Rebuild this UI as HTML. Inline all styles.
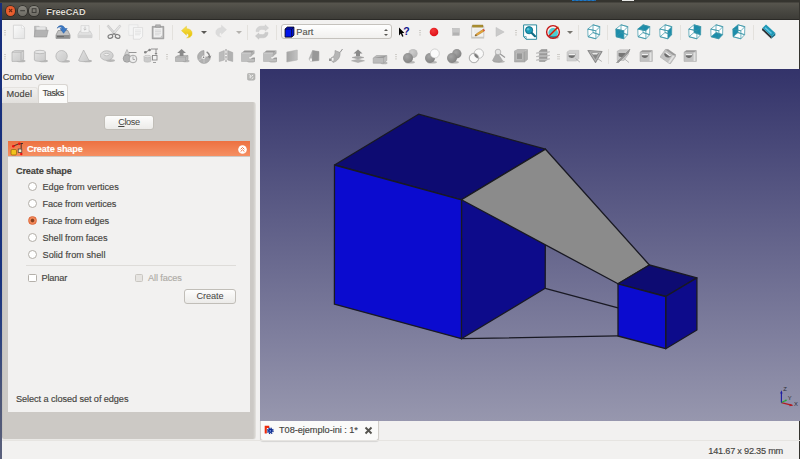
<!DOCTYPE html>
<html><head><meta charset="utf-8"><title>FreeCAD</title>
<style>
html,body{margin:0;padding:0;}
body{width:800px;height:459px;overflow:hidden;background:#f2f1f0;position:relative;font-family:"Liberation Sans","DejaVu Sans",sans-serif;font-size:9.2px;color:#45443f;}
.abs{position:absolute;}
#title{left:0;top:0;width:800px;height:20px;background:linear-gradient(#35342f 0,#35342f 2px,#57554e 3px,#4a4943 10px,#3e3d38 18.5px,#2b2a27 19.5px,#2b2a27 20px);}
#title .t{position:absolute;left:46.3px;top:7.2px;text-shadow:0 -0.6px 0 #22211e;font-weight:bold;font-size:9.2px;color:#dfdbd2;letter-spacing:0;}
.wb{position:absolute;top:6.4px;width:9.2px;height:9.2px;border-radius:50%;}
#ledge{left:0;top:2.500px;width:1.600px;height:457px;background:linear-gradient(#172e7c 0,#18327e 60%,#2a4180 72%,#4d5676 86%,#5a607c 100%);z-index:5;}
#view{left:260px;top:69px;width:540px;height:351.500px;background:linear-gradient(#33336a,#9797ae);}
#pane{left:2.400px;top:102.400px;width:253.900px;height:337px;background:linear-gradient(90deg,#b9b6b1 0,#ccc9c5 .8px,#ccc9c5 251.100px,#d9d7d3 252.900px,#e6e4e1 253.900px);border-radius:0 3px 3px 2px;box-shadow:0 .8px 0 #e9e7e4;}
#box{left:8px;top:156.500px;width:242.200px;height:255px;background:#f2f1f0;}
#hdr{left:8px;top:141.300px;width:242.200px;height:15.200px;background:linear-gradient(#ed7141,#f58f62);}
.lbl{position:absolute;white-space:nowrap;line-height:12px;-webkit-text-stroke:.15px currentColor;}
.radio{position:absolute;width:7.300px;height:7.300px;border-radius:50%;border:.9px solid #b2aea8;background:#fff;}
.chk{position:absolute;width:6.600px;height:6.600px;border-radius:1.500px;border:.9px solid #b4b0aa;background:#fff;}
.btn{position:absolute;border:1px solid #c1beb8;border-radius:3px;background:linear-gradient(#fdfdfc,#ecebe9);box-sizing:border-box;text-align:center;line-height:13px;}
</style></head><body>
<div id="title" class="abs">
 <div class="wb" style="left:5.9px;background:radial-gradient(#f2703f,#de4a1c);box-shadow:0 0 0 .7px #36251d;"></div>
 <div class="wb" style="left:17.7px;background:linear-gradient(#8a8880,#6c6a63);box-shadow:0 0 0 .7px #2d2c29;"></div>
 <div class="wb" style="left:29.4px;background:linear-gradient(#8a8880,#6c6a63);box-shadow:0 0 0 .7px #2d2c29;"></div>
 <svg class="abs" style="left:5.9px;top:6.4px" width="34" height="10" viewBox="0 0 34 10"><path d="M3 3L6.200 6.200M6.200 3L3 6.200" stroke="#6a2410" stroke-width="1.100"/><path d="M14.200 4.700H19" stroke="#3f3e3a" stroke-width="1.100"/><rect x="26.200" y="2.700" width="3.800" height="3.800" fill="none" stroke="#3f3e3a" stroke-width="1"/></svg>
 <div class="t">FreeCAD</div>
</div>
<div id="ledge" class="abs"></div>
<div id="redge" class="abs" style="left:798.700px;top:0;width:1.300px;height:459px;background:#35342f;"></div>
<div class="abs" style="left:571.500px;top:0;width:24px;height:1.300px;background:repeating-linear-gradient(90deg,#1a78c8 0,#1a78c8 2px,#2b4f78 3px,#1a78c8 4px);"></div>
<div class="abs" style="left:622px;top:0;width:12px;height:1px;background:#e8e8e6;"></div>
<div id="tb" class="abs" style="left:0;top:20px;width:800px;height:49px;"></div><!--TB--><div class="abs" style="left:3.8px;top:30.1px;width:2.5px;height:1px;background:#cfcdc9;box-shadow:0 2.2px 0 #cfcdc9,0 4.4px 0 #cfcdc9;"></div>
<svg class="abs" style="left:11.0px;top:24.0px" width="16" height="16" viewBox="0 0 16 16"><defs><linearGradient id="gN" x1="0" y1="0" x2="1" y2="1"><stop offset="0" stop-color="#fbfbfb"/><stop offset="1" stop-color="#e3e3e3"/></linearGradient></defs><path d="M2.4 1.2H11L13.6 3.8V14.6H2.4Z" fill="url(#gN)" stroke="#cfcfcf" stroke-width=".8"/><path d="M10.6 1.4V4.2H13.4" fill="#fff" stroke="#d8d8d8" stroke-width=".6"/></svg>
<svg class="abs" style="left:33.0px;top:24.0px" width="16" height="16" viewBox="0 0 16 16"><path d="M1.5 2.3H6L7 3.5H13.6V12.5H1.5Z" fill="#bdbdbd" stroke="#a9a9a9" stroke-width=".6"/><path d="M3.2 2.8H12.8V9H3.2Z" fill="#e6e6e6" stroke="#c4c4c4" stroke-width=".5"/><path d="M2.2 6.2H15.2L13.6 13H1.2Z" fill="#b3b3b3" stroke="#9c9c9c" stroke-width=".6"/></svg>
<svg class="abs" style="left:55.0px;top:24.0px" width="16" height="16" viewBox="0 0 16 16"><path d="M3.2 6.5H12.8L15 11V14.4H1V11Z" fill="#c2c2c2" stroke="#8a8a8a" stroke-width=".7"/><path d="M1.3 11H14.7V14.2H1.3Z" fill="#8f8f8f"/><path d="M2 12.6H9" stroke="#5e5e5e" stroke-width=".8"/><path d="M2.2 4.2C3.5 .8 8.6 .4 10 4.6L12.2 4.6L8.6 9.3L5 4.6H7.2C6.6 2.6 4 2.4 2.2 4.2Z" fill="#3a78c4" stroke="#2a5c9e" stroke-width=".5"/></svg>
<svg class="abs" style="left:77.0px;top:24.0px" width="16" height="16" viewBox="0 0 16 16"><path d="M3 7H13L15 10.6V13.6H1V10.6Z" fill="#e2e2e2" stroke="#c6c6c6" stroke-width=".7"/><path d="M4 1.6H12V8.6H4Z" fill="#f2f2f2" stroke="#cdcdcd" stroke-width=".6"/><path d="M8 2.6V6M6.6 4.8L8 6.2L9.4 4.8" stroke="#bdbdbd" stroke-width=".8" fill="none"/><path d="M1.3 10.8H14.7V13.4H1.3Z" fill="#d2d2d2"/></svg>
<div class="abs" style="left:99.2px;top:24.5px;width:1px;height:15px;background:#e3e1dd;"></div>
<svg class="abs" style="left:106.0px;top:24.0px" width="16" height="16" viewBox="0 0 16 16"><path d="M2.300 .9L9.800 9.400L8.200 10.800L1.300 2.400Z" fill="#d8d8d8" stroke="#b6b6b6" stroke-width=".5"/><path d="M13.700 .9L6.200 9.400L7.800 10.800L14.700 2.400Z" fill="#e4e4e4" stroke="#b6b6b6" stroke-width=".5"/><ellipse cx="4.400" cy="12.400" rx="2.400" ry="1.800" fill="none" stroke="#808080" stroke-width="1.150" transform="rotate(-20 4.400 12.400)"/><ellipse cx="11.600" cy="12.400" rx="2.400" ry="1.800" fill="none" stroke="#808080" stroke-width="1.150" transform="rotate(20 11.600 12.400)"/><path d="M6.400 10.900L8 9.400L9.600 10.900" stroke="#808080" stroke-width="1.100" fill="none"/></svg>
<svg class="abs" style="left:127.5px;top:24.0px" width="16" height="16" viewBox="0 0 16 16"><path d="M.8 .8H10V11.4H.8Z" fill="#f4f4f4" stroke="#dcdcdc" stroke-width=".6"/><path d="M5.4 3.6H14.6V12.4L12 15.2H5.4Z" fill="#f6f6f6" stroke="#d2d2d2" stroke-width=".6"/><path d="M7 6H13M7 7.6H13M7 9.200H13M7 10.800H12" stroke="#dedede" stroke-width=".7"/></svg>
<svg class="abs" style="left:150.0px;top:24.0px" width="16" height="16" viewBox="0 0 16 16"><path d="M2.200 2.400H13.800V14.800H2.200Z" fill="#a6a6a6" stroke="#8e8e8e" stroke-width=".6"/><path d="M3.500 3.700H12.500V13.500H3.500Z" fill="#efefef"/><path d="M5.6 .8H10.4V3.200H5.6Z" fill="#b5b5b5" stroke="#8a8a8a" stroke-width=".5"/><path d="M5 6H11M5 7.600H11M5 9.200H11M5 10.800H9.5" stroke="#cfcfcf" stroke-width=".7"/><path d="M10 13.4L12.4 11V13.4Z" fill="#bdbdbd"/></svg>
<div class="abs" style="left:172.0px;top:24.5px;width:1px;height:15px;background:#e3e1dd;"></div>
<svg class="abs" style="left:179.0px;top:23.7px" width="16" height="16" viewBox="0 0 16 16"><defs><linearGradient id="gU" x1="0" y1="0" x2="0" y2="1"><stop offset="0" stop-color="#f8e050"/><stop offset="1" stop-color="#e6c000"/></linearGradient></defs><g transform="translate(1.1 1.300) scale(.86)"><path d="M1.6 6.200L7.400 1V4C12.2 4 14.600 7 13.800 10.800C13.200 13.200 11 14.800 7.600 14.600C10.400 13.400 11 10.400 7.400 9.200V11.600Z" fill="url(#gU)" stroke="#e6c820" stroke-width=".5"/></g></svg>
<div class="abs" style="left:201.4px;top:30.9px;width:0;height:0;border-left:3.100px solid transparent;border-right:3.100px solid transparent;border-top:3.600px solid #5a5955;"></div>
<svg class="abs" style="left:213.3px;top:23.4px" width="16" height="16" viewBox="0 0 16 16"><g transform="translate(1.1 1.300) scale(.86)"><path d="M14.400 6.200L8.600 1V4C3.800 4 1.400 7 2.200 10.800C2.800 13.200 5 14.800 8.400 14.600C5.600 13.400 5 10.400 8.600 9.200V11.600Z" fill="#d8d8d8" stroke="#cdcdcd" stroke-width=".4" opacity=".85"/></g></svg>
<div class="abs" style="left:235.7px;top:30.9px;width:0;height:0;border-left:3.100px solid transparent;border-right:3.100px solid transparent;border-top:3.600px solid #b4b2ae;"></div>
<div class="abs" style="left:247.0px;top:24.5px;width:1px;height:15px;background:#e3e1dd;"></div>
<svg class="abs" style="left:254.3px;top:23.7px" width="16" height="16" viewBox="0 0 16 16"><path d="M2 7.600C2 3.600 5 1.800 8.400 2.200L11.200 2.200V.8L14.600 4L11.200 7V5.400H8.400C6.200 5.200 5 6.200 5 7.600Z" fill="#d4d4d4" stroke="#c6c6c6" stroke-width=".4"/><path d="M14 8.400C14 12.400 11 14.200 7.600 13.800L4.800 13.800V15.200L1.400 12L4.800 9V10.600H7.600C9.800 10.800 11 9.800 11 8.400Z" fill="#cbcbcb" stroke="#bdbdbd" stroke-width=".4"/></svg>
<div class="abs" style="left:276.0px;top:24.5px;width:1px;height:15px;background:#e3e1dd;"></div>
<div class="abs" style="left:280.700px;top:24.300px;width:111.200px;height:14.400px;border:1px solid #c5c2bd;border-radius:3px;background:linear-gradient(#ffffff,#f1f0ee);box-sizing:border-box;"></div>
<svg class="abs" style="left:283.500px;top:25.500px" width="12" height="13" viewBox="0 0 12 13"><path d="M1.100 3L3.300 1.100H9.900V9.200L7.700 11.100H1.100Z" fill="#0014ec" stroke="#05051e" stroke-width=".9" stroke-linejoin="round"/><path d="M1.100 3H7.700L9.900 1.100M7.700 3V11.100" fill="none" stroke="#05051e" stroke-width=".8"/></svg>
<div class="lbl" style="left:296.3px;top:26px;letter-spacing:.05px;color:#55544f">Part</div>
<div class="abs" style="left:384.400px;top:28.600px;width:0;height:0;border-left:2px solid transparent;border-right:2px solid transparent;border-bottom:2.500px solid #5a5955;"></div>
<div class="abs" style="left:384.400px;top:34.200px;width:0;height:0;border-left:2px solid transparent;border-right:2px solid transparent;border-top:2.500px solid #5a5955;"></div>
<svg class="abs" style="left:395.6px;top:23.7px" width="16" height="16" viewBox="0 0 16 16"><path d="M3 3.600V11.400L4.800 9.600L6.200 12.800L7.500 12.200L6.100 9.100H8.400Z" fill="#000"/><text x="7.300" y="11" font-family="Liberation Sans,sans-serif" font-weight="bold" font-size="10.500" fill="#14148c">?</text></svg>
<div class="abs" style="left:418.6px;top:29.6px;width:2.5px;height:1px;background:#cfcdc9;box-shadow:0 2.2px 0 #cfcdc9,0 4.4px 0 #cfcdc9;"></div>
<svg class="abs" style="left:426.0px;top:23.7px" width="16" height="16" viewBox="0 0 16 16"><defs><radialGradient id="gR" cx=".4" cy=".35" r=".7"><stop offset="0" stop-color="#f43a3a"/><stop offset="1" stop-color="#dc0c14"/></radialGradient></defs><circle cx="8" cy="8" r="4.300" fill="url(#gR)"/></svg>
<svg class="abs" style="left:448.4px;top:23.6px" width="16" height="16" viewBox="0 0 16 16"><rect x="4.600" y="4.400" width="6.800" height="7" fill="#c6c6c6" stroke="#b4b4b4" stroke-width=".5"/><rect x="5" y="8.500" width="6" height="2.600" fill="#b2b2b2"/></svg>
<svg class="abs" style="left:470.3px;top:23.5px" width="16" height="16" viewBox="0 0 16 16"><path d="M1.600 2.600H13.800V13.200H1.600Z" fill="#f3f3f1" stroke="#bdbdb8" stroke-width=".7"/><path d="M1.300 13H14.100V14.600H1.300Z" fill="#c9c9c4"/><path d="M2.400 1H13V3.200H2.400Z" fill="#ad9232" stroke="#8a7220" stroke-width=".4"/><path d="M4 6H11M4 8H9" stroke="#e0e0dc" stroke-width=".7"/><path d="M5.800 10.200L12.800 5.600L14 7.200L7 11.600L5 12Z" fill="#e8a83a" stroke="#a8741c" stroke-width=".5"/><path d="M12.800 5.600L13.800 5L15 6.600L14 7.200Z" fill="#e03a2a"/><path d="M5 12L5.800 10.200L7 11.600Z" fill="#5a4a30"/></svg>
<svg class="abs" style="left:492.0px;top:23.6px" width="16" height="16" viewBox="0 0 16 16"><path d="M4 3.400L12.200 8L4 12.400Z" fill="#cacaca" stroke="#bcbcbc" stroke-width=".5"/></svg>
<div class="abs" style="left:514.8px;top:29.6px;width:2.5px;height:1px;background:#cfcdc9;box-shadow:0 2.2px 0 #cfcdc9,0 4.4px 0 #cfcdc9;"></div>
<svg class="abs" style="left:522.0px;top:23.7px" width="16" height="16" viewBox="0 0 16 16"><path d="M1.600 .9H14.600V15.300H4.200L1.600 12.600Z" fill="#fff" stroke="#2c8a9e" stroke-width="1"/><path d="M1.600 12.600H4.200V15.300" fill="none" stroke="#2c8a9e" stroke-width=".7"/><circle cx="7.100" cy="6.200" r="3.600" fill="#1b9cb8" stroke="#0f6c84" stroke-width=".9"/><circle cx="6.100" cy="5.200" r="1.300" fill="#5cc4d8"/><path d="M9.800 9L13 12.200" stroke="#0f6c84" stroke-width="2.200" stroke-linecap="round"/></svg>
<svg class="abs" style="left:544.7px;top:23.7px" width="16" height="16" viewBox="0 0 16 16"><circle cx="8.200" cy="8.800" r="4.800" fill="#48ccd4"/><path d="M4 11.200A4.800 4.800 0 0 0 12.600 11.600Q8 13 4 11.200Z" fill="#1a9aa8"/><ellipse cx="8.800" cy="13.600" rx="5" ry="1.200" fill="#555" opacity=".5"/><path d="M6 10.400L13.600 2.800" stroke="#e8c040" stroke-width="1.600"/><circle cx="8" cy="8" r="6.400" fill="none" stroke="#c41616" stroke-width="1.400"/><path d="M12.500 3.500L3.500 12.500" stroke="#c41616" stroke-width="1.400"/></svg>
<div class="abs" style="left:566.5px;top:30.9px;width:0;height:0;border-left:3.100px solid transparent;border-right:3.100px solid transparent;border-top:3.600px solid #77756f;"></div>
<div class="abs" style="left:578.2px;top:24.5px;width:1px;height:15px;background:#e3e1dd;"></div>
<svg class="abs" style="left:585.5px;top:23.7px" width="16" height="16" viewBox="0 0 16 16"><path d="M1.80 5.05L7.00 0.80L13.80 2.70L13.60 10.70L9.90 14.80L2.00 12.70Z" fill="#fdfefe"/><g fill="none" stroke="#3793a6" stroke-width=".7" stroke-linejoin="round"><path d="M7.00 0.80L13.80 2.70L13.60 10.70L7.00 8.55Z"/><path d="M1.80 5.05L9.90 6.80L9.90 14.80L2.00 12.70Z"/><path d="M1.80 5.05L7.00 0.80L13.80 2.70L9.90 6.80Z"/><path d="M2.00 12.70L9.90 14.80L13.60 10.70L7.00 8.55Z"/></g></svg>
<div class="abs" style="left:607.1px;top:24.5px;width:1px;height:15px;background:#e3e1dd;"></div>
<svg class="abs" style="left:613.8px;top:23.7px" width="16" height="16" viewBox="0 0 16 16"><path d="M1.80 5.05L7.00 0.80L13.80 2.70L13.60 10.70L9.90 14.80L2.00 12.70Z" fill="#fdfefe"/><path d="M1.80 5.05L9.90 6.80L9.90 14.80L2.00 12.70Z" fill="#1c8dab"/><g fill="none" stroke="#3793a6" stroke-width=".7" stroke-linejoin="round"><path d="M7.00 0.80L13.80 2.70L13.60 10.70L7.00 8.55Z"/><path d="M1.80 5.05L9.90 6.80L9.90 14.80L2.00 12.70Z"/><path d="M1.80 5.05L7.00 0.80L13.80 2.70L9.90 6.80Z"/><path d="M2.00 12.70L9.90 14.80L13.60 10.70L7.00 8.55Z"/></g></svg>
<svg class="abs" style="left:635.9px;top:23.7px" width="16" height="16" viewBox="0 0 16 16"><path d="M1.80 5.05L7.00 0.80L13.80 2.70L13.60 10.70L9.90 14.80L2.00 12.70Z" fill="#fdfefe"/><path d="M1.80 5.05L7.00 0.80L13.80 2.70L9.90 6.80Z" fill="#1c8dab"/><g fill="none" stroke="#3793a6" stroke-width=".7" stroke-linejoin="round"><path d="M7.00 0.80L13.80 2.70L13.60 10.70L7.00 8.55Z"/><path d="M1.80 5.05L9.90 6.80L9.90 14.80L2.00 12.70Z"/><path d="M1.80 5.05L7.00 0.80L13.80 2.70L9.90 6.80Z"/><path d="M2.00 12.70L9.90 14.80L13.60 10.70L7.00 8.55Z"/></g></svg>
<svg class="abs" style="left:657.9px;top:23.7px" width="16" height="16" viewBox="0 0 16 16"><path d="M1.80 5.05L7.00 0.80L13.80 2.70L13.60 10.70L9.90 14.80L2.00 12.70Z" fill="#fdfefe"/><path d="M9.90 6.80L13.80 2.70L13.60 10.70L9.90 14.80Z" fill="#1c8dab"/><g fill="none" stroke="#3793a6" stroke-width=".7" stroke-linejoin="round"><path d="M7.00 0.80L13.80 2.70L13.60 10.70L7.00 8.55Z"/><path d="M1.80 5.05L9.90 6.80L9.90 14.80L2.00 12.70Z"/><path d="M1.80 5.05L7.00 0.80L13.80 2.70L9.90 6.80Z"/><path d="M2.00 12.70L9.90 14.80L13.60 10.70L7.00 8.55Z"/></g></svg>
<div class="abs" style="left:679.9px;top:24.5px;width:1px;height:15px;background:#e3e1dd;"></div>
<svg class="abs" style="left:687.0px;top:23.7px" width="16" height="16" viewBox="0 0 16 16"><path d="M1.80 5.05L7.00 0.80L13.80 2.70L13.60 10.70L9.90 14.80L2.00 12.70Z" fill="#fdfefe"/><path d="M7.00 0.80L13.80 2.70L13.60 10.70L7.00 8.55Z" fill="#1c8dab"/><g fill="none" stroke="#3793a6" stroke-width=".7" stroke-linejoin="round"><path d="M7.00 0.80L13.80 2.70L13.60 10.70L7.00 8.55Z"/><path d="M1.80 5.05L9.90 6.80L9.90 14.80L2.00 12.70Z"/><path d="M1.80 5.05L7.00 0.80L13.80 2.70L9.90 6.80Z"/><path d="M2.00 12.70L9.90 14.80L13.60 10.70L7.00 8.55Z"/></g></svg>
<svg class="abs" style="left:709.0px;top:23.7px" width="16" height="16" viewBox="0 0 16 16"><path d="M1.80 5.05L7.00 0.80L13.80 2.70L13.60 10.70L9.90 14.80L2.00 12.70Z" fill="#fdfefe"/><path d="M2.00 12.70L9.90 14.80L13.60 10.70L7.00 8.55Z" fill="#1c8dab"/><g fill="none" stroke="#3793a6" stroke-width=".7" stroke-linejoin="round"><path d="M7.00 0.80L13.80 2.70L13.60 10.70L7.00 8.55Z"/><path d="M1.80 5.05L9.90 6.80L9.90 14.80L2.00 12.70Z"/><path d="M1.80 5.05L7.00 0.80L13.80 2.70L9.90 6.80Z"/><path d="M2.00 12.70L9.90 14.80L13.60 10.70L7.00 8.55Z"/></g></svg>
<svg class="abs" style="left:731.0px;top:23.7px" width="16" height="16" viewBox="0 0 16 16"><path d="M1.80 5.05L7.00 0.80L13.80 2.70L13.60 10.70L9.90 14.80L2.00 12.70Z" fill="#fdfefe"/><path d="M1.80 5.05L7.00 0.80L7.00 8.55L2.00 12.70Z" fill="#1c8dab"/><g fill="none" stroke="#3793a6" stroke-width=".7" stroke-linejoin="round"><path d="M7.00 0.80L13.80 2.70L13.60 10.70L7.00 8.55Z"/><path d="M1.80 5.05L9.90 6.80L9.90 14.80L2.00 12.70Z"/><path d="M1.80 5.05L7.00 0.80L13.80 2.70L9.90 6.80Z"/><path d="M2.00 12.70L9.90 14.80L13.60 10.70L7.00 8.55Z"/></g></svg>
<div class="abs" style="left:753.2px;top:24.5px;width:1px;height:15px;background:#e3e1dd;"></div>
<svg class="abs" style="left:760.5px;top:24.2px" width="16" height="16" viewBox="0 0 16 16"><path d="M1.500 3.900L10.800 12.400L10.200 14.800L.9 6Z" fill="#2e3236"/><path d="M10.800 12.400L14.300 9.100V11.200L10.200 14.800Z" fill="#0f6a84"/><path d="M1.500 3.900L5 .6L14.300 9.100L10.800 12.400Z" fill="#1e98b6"/><path d="M4 3.600L10.500 9.500" stroke="#62c6e6" stroke-width="1.600"/></svg>
<div class="abs" style="left:3.8px;top:53.8px;width:2.5px;height:1px;background:#cfcdc9;box-shadow:0 2.2px 0 #cfcdc9,0 4.4px 0 #cfcdc9;"></div>
<svg class="abs" style="left:10.0px;top:48.3px;opacity:0.88" width="16" height="16" viewBox="0 0 16 16"><defs><linearGradient id="gG" x1="0" y1="0" x2="1" y2="1"><stop offset="0" stop-color="#e0e0e0"/><stop offset="1" stop-color="#c4c4c4"/></linearGradient></defs><ellipse cx="11" cy="13" rx="4.5" ry="1.300" fill="#9a9a9a" opacity=".75"/><path d="M2 4.200L4.600 2.600H13.600V11.400L11 13.400H2Z" fill="url(#gG)" stroke="#a6a6a6" stroke-width=".7" stroke-linejoin="round"/><path d="M2 4.200H11L13.600 2.600M11 4.200V13.400" fill="none" stroke="#a6a6a6" stroke-width=".7"/></svg>
<svg class="abs" style="left:32.3px;top:48.3px;opacity:0.88" width="16" height="16" viewBox="0 0 16 16"><ellipse cx="11.5" cy="13" rx="4.5" ry="1.300" fill="#9a9a9a" opacity=".75"/><path d="M2.400 4V12C2.400 13.800 13.400 13.800 13.400 12V4Z" fill="url(#gG)" stroke="#a6a6a6" stroke-width=".7"/><ellipse cx="7.900" cy="4" rx="5.500" ry="1.700" fill="#e6e6e6" stroke="#a6a6a6" stroke-width=".7"/></svg>
<svg class="abs" style="left:54.3px;top:48.3px;opacity:0.88" width="16" height="16" viewBox="0 0 16 16"><ellipse cx="11.5" cy="13.2" rx="4.5" ry="1.300" fill="#9a9a9a" opacity=".75"/><circle cx="7.600" cy="8.200" r="5.700" fill="url(#gG)" stroke="#a6a6a6" stroke-width=".7"/></svg>
<svg class="abs" style="left:76.0px;top:48.3px;opacity:0.88" width="16" height="16" viewBox="0 0 16 16"><ellipse cx="11.5" cy="13" rx="4.5" ry="1.300" fill="#9a9a9a" opacity=".75"/><path d="M7.600 2L13 12.400C13 14 2.600 14 2.600 12.400Z" fill="url(#gG)" stroke="#a6a6a6" stroke-width=".7" stroke-linejoin="round"/></svg>
<svg class="abs" style="left:98.7px;top:48.3px;opacity:0.88" width="16" height="16" viewBox="0 0 16 16"><ellipse cx="11.5" cy="12.6" rx="4.5" ry="1.300" fill="#9a9a9a" opacity=".75"/><ellipse cx="7.800" cy="7.600" rx="6.400" ry="4.800" fill="url(#gG)" stroke="#a6a6a6" stroke-width=".7"/><ellipse cx="7.600" cy="6.600" rx="2.600" ry="1.200" fill="#f2f1f0" stroke="#a6a6a6" stroke-width=".6"/></svg>
<svg class="abs" style="left:121.5px;top:48.3px;opacity:0.88" width="16" height="16" viewBox="0 0 16 16"><path d="M5 1.500L7.400 6.500H2.600Z" fill="#cfcfcf" stroke="#9c9c9c" stroke-width=".6"/><path d="M7 4.500H14.500" stroke="#8a8a8a" stroke-width="1"/><circle cx="5" cy="10.500" r="3.800" fill="#9e9e9e" stroke="#858585" stroke-width=".6"/><path d="M3 8V13M5 7V14M7 8V13" stroke="#c4c4c4" stroke-width=".6"/><circle cx="11" cy="11" r="3.800" fill="#ececec" stroke="#8a8a8a" stroke-width=".8"/><path d="M11 8.500V11.500H13" stroke="#8a8a8a" stroke-width=".7" fill="none"/></svg>
<svg class="abs" style="left:143.3px;top:48.3px;opacity:0.88" width="16" height="16" viewBox="0 0 16 16"><path d="M2 4.500L7.500 1.500M8 1H15M13 1V6" stroke="#7a7a7a" stroke-width=".9" fill="none"/><circle cx="2.300" cy="4.300" r="1.300" fill="#777"/><circle cx="6.600" cy="2" r="1.300" fill="#777"/><path d="M11.500 5L13 7L14.500 5Z" fill="#777"/><path d="M1 8.500V13C1 14.500 8 14.500 8 13V8.500Z" fill="#c6c6c6" stroke="#a6a6a6" stroke-width=".5"/><ellipse cx="4.500" cy="8.500" rx="3.500" ry="1.200" fill="#dedede" stroke="#a6a6a6" stroke-width=".5"/><rect x="9.500" y="7.500" width="4.500" height="4.500" fill="#f4f4f4" stroke="#7a7a7a" stroke-width=".9"/><path d="M10 14.500H13" stroke="#8a8a8a" stroke-width=".9"/></svg>
<div class="abs" style="left:165.8px;top:53.8px;width:2.5px;height:1px;background:#cfcdc9;box-shadow:0 2.2px 0 #cfcdc9,0 4.4px 0 #cfcdc9;"></div>
<svg class="abs" style="left:173.5px;top:48.3px;opacity:0.88" width="16" height="16" viewBox="0 0 16 16"><ellipse cx="12" cy="13" rx="3.5" ry="1.300" fill="#9a9a9a" opacity=".75"/><path d="M1.500 9L4 7.500H14V11.500L11.500 13.500H1.500Z" fill="#b4b4b4" stroke="#959595" stroke-width=".6"/><path d="M1.500 9H11.500L14 7.500M11.500 9V13.500" stroke="#959595" stroke-width=".6" fill="none"/><path d="M7.600 1L12 5H9.500V8H5.700V5H3.200Z" fill="#7c7c7c"/></svg>
<svg class="abs" style="left:195.6px;top:48.5px;opacity:0.88" width="16" height="16" viewBox="0 0 16 16"><path d="M8 8L8 1.600A6.400 6.400 0 1 0 14.400 8Z" fill="#a9a9a9" stroke="#8c8c8c" stroke-width=".6"/><path d="M8 8L2.500 11.500M8 8L8 14.400" stroke="#d4d4d4" stroke-width=".6"/><circle cx="7.600" cy="8.300" r="1.800" fill="#f2f1f0"/><circle cx="7.600" cy="8.300" r=".8" fill="#666"/><path d="M11 2.200A6.400 6.400 0 0 1 14.300 7L15.500 6.500L13.600 9.500L11.400 7L12.800 7A5 5 0 0 0 10.300 3.600Z" fill="#7a7a7a"/></svg>
<svg class="abs" style="left:217.5px;top:48.3px;opacity:0.88" width="16" height="16" viewBox="0 0 16 16"><path d="M1.300 4.500L6.300 2.500V12L1.300 13.500Z" fill="#b4b4b4" stroke="#9a9a9a" stroke-width=".5"/><path d="M14.700 4.500L9.700 2.500V12L14.700 13.500Z" fill="#a9a9a9" stroke="#909090" stroke-width=".5"/><path d="M8 1V15" stroke="#7a7a7a" stroke-width=".9" stroke-dasharray="2.500 1"/></svg>
<svg class="abs" style="left:239.5px;top:48.3px;opacity:0.88" width="16" height="16" viewBox="0 0 16 16"><ellipse cx="11" cy="13.3" rx="4" ry="1.300" fill="#9a9a9a" opacity=".75"/><path d="M1.500 5L4.500 2.500H14.500L11 5.500Z" fill="#8e8e8e"/><path d="M1.500 5H11V8.500C8 8.500 8 11 10.500 11H14.500V13.500H1.500Z" fill="#b9b9b9" stroke="#9c9c9c" stroke-width=".5"/><path d="M11 5L14.500 2.500V5.500L11 8.500Z" fill="#a4a4a4"/><path d="M1.500 5H11" stroke="#dcdcdc" stroke-width=".8"/><path d="M10.500 11L12.800 9.600H15V12L14.500 13.500V11Z" fill="#909090"/></svg>
<svg class="abs" style="left:261.5px;top:48.3px;opacity:0.88" width="16" height="16" viewBox="0 0 16 16"><ellipse cx="11" cy="13.3" rx="4" ry="1.300" fill="#9a9a9a" opacity=".75"/><path d="M1.500 5L4.500 2.500H14.500L11 5.500Z" fill="#8e8e8e"/><path d="M1.500 5H11V8.500C8 8.500 8 11 10.500 11H14.500V13.500H1.500Z" fill="#b9b9b9" stroke="#9c9c9c" stroke-width=".5"/><path d="M11 5L14.500 2.500V5.500L11 8.500Z" fill="#a4a4a4"/><path d="M1.500 5H11" stroke="#dcdcdc" stroke-width=".8"/><path d="M10.500 11L12.800 9.600H15V12L14.500 13.500V11Z" fill="#909090"/></svg>
<svg class="abs" style="left:283.5px;top:48.0px;opacity:0.88" width="16" height="16" viewBox="0 0 16 16"><defs><linearGradient id="gP" x1="0" y1="0" x2="1" y2="0"><stop offset="0" stop-color="#9a9a9a"/><stop offset="1" stop-color="#bcbcbc"/></linearGradient></defs><path d="M2.800 4L13.300 2V12L2.800 14Z" fill="url(#gP)" stroke="#a2a2a2" stroke-width=".5"/></svg>
<svg class="abs" style="left:305.5px;top:48.3px;opacity:0.88" width="16" height="16" viewBox="0 0 16 16"><path d="M6.500 2.500L13 3.500V12.500L4.500 13.500L3 11Z" fill="#adadad" stroke="#9a9a9a" stroke-width=".5"/><path d="M6.500 2.500L13 3.500L12.500 12.500L6 13Z" fill="#8c8c8c"/><rect x="3.800" y="10.500" width="2.200" height="3" fill="#f2f2f2"/></svg>
<svg class="abs" style="left:328.0px;top:48.3px;opacity:0.88" width="16" height="16" viewBox="0 0 16 16"><path d="M7 2.500L12 4.500C12.500 9 10 13 5 14.500L3 10C6 9 7.500 6 7 2.500Z" fill="#adadad" stroke="#8e8e8e" stroke-width=".6"/><path d="M12 4.500L14.500 1" stroke="#777" stroke-width=".9"/><path d="M1 10.500H5V13H1Z" fill="#8a8a8a"/><rect x="3.500" y="9.800" width="2.400" height="3.200" fill="#f2f2f2" stroke="#999" stroke-width=".4"/></svg>
<svg class="abs" style="left:349.5px;top:48.3px;opacity:0.88" width="16" height="16" viewBox="0 0 16 16"><path d="M8 1.500L12.500 5.500H10V8H6V5.500H3.500Z" fill="#7c7c7c"/><path d="M2 9.500L8 8L14 9.500L8 11Z" fill="#9c9c9c" stroke="#858585" stroke-width=".4"/><path d="M1.500 12.800L8 11.200L14.500 12.800L8 14.500Z" fill="#a8a8a8" stroke="#8c8c8c" stroke-width=".4"/></svg>
<svg class="abs" style="left:372.0px;top:48.8px;opacity:0.88" width="16" height="16" viewBox="0 0 16 16"><ellipse cx="12" cy="14" rx="3.5" ry="1.300" fill="#9a9a9a" opacity=".75"/><path d="M1.200 9L4.500 6.500H14.800V11.500L11.500 14.200H1.200Z" fill="#b4b4b4" stroke="#959595" stroke-width=".6"/><path d="M1.200 9H11.500L14.800 6.500Z" fill="#8f8f8f"/><path d="M11.500 9V14.200" stroke="#959595" stroke-width=".6"/></svg>
<div class="abs" style="left:394.8px;top:53.8px;width:2.5px;height:1px;background:#cfcdc9;box-shadow:0 2.2px 0 #cfcdc9,0 4.4px 0 #cfcdc9;"></div>
<svg class="abs" style="left:402.0px;top:48.3px;opacity:0.88" width="16" height="16" viewBox="0 0 16 16"><defs><radialGradient id="gS" cx=".4" cy=".35" r=".75"><stop offset="0" stop-color="#9c9c9c"/><stop offset="1" stop-color="#6e6e6e"/></radialGradient><radialGradient id="gL" cx=".4" cy=".35" r=".75"><stop offset="0" stop-color="#c8c8c8"/><stop offset="1" stop-color="#a6a6a6"/></radialGradient></defs><ellipse cx="8" cy="14.3" rx="5" ry="1.300" fill="#9a9a9a" opacity=".75"/><circle cx="11" cy="5.500" r="4.600" fill="url(#gL)"/><circle cx="6" cy="10" r="5" fill="url(#gS)"/></svg>
<svg class="abs" style="left:424.0px;top:48.3px;opacity:0.88" width="16" height="16" viewBox="0 0 16 16"><defs><radialGradient id="gS" cx=".4" cy=".35" r=".75"><stop offset="0" stop-color="#9c9c9c"/><stop offset="1" stop-color="#6e6e6e"/></radialGradient><radialGradient id="gL" cx=".4" cy=".35" r=".75"><stop offset="0" stop-color="#c8c8c8"/><stop offset="1" stop-color="#a6a6a6"/></radialGradient></defs><ellipse cx="8" cy="14.3" rx="5" ry="1.300" fill="#9a9a9a" opacity=".75"/><circle cx="6" cy="10" r="5" fill="url(#gS)"/><circle cx="10.800" cy="5.500" r="4.500" fill="#fdfdfd" stroke="#b4b4b4" stroke-width=".6"/></svg>
<svg class="abs" style="left:446.0px;top:48.3px;opacity:0.88" width="16" height="16" viewBox="0 0 16 16"><defs><radialGradient id="gS" cx=".4" cy=".35" r=".75"><stop offset="0" stop-color="#9c9c9c"/><stop offset="1" stop-color="#6e6e6e"/></radialGradient><radialGradient id="gL" cx=".4" cy=".35" r=".75"><stop offset="0" stop-color="#c8c8c8"/><stop offset="1" stop-color="#a6a6a6"/></radialGradient></defs><ellipse cx="8" cy="14.3" rx="5" ry="1.300" fill="#9a9a9a" opacity=".75"/><circle cx="10.800" cy="5.700" r="4.700" fill="url(#gS)"/><circle cx="6" cy="10" r="5" fill="url(#gS)"/></svg>
<svg class="abs" style="left:468.0px;top:48.3px;opacity:0.88" width="16" height="16" viewBox="0 0 16 16"><circle cx="6" cy="10" r="4.700" fill="#fbfbfb" stroke="#a2a2a2" stroke-width=".7"/><circle cx="10.800" cy="5.600" r="4.700" fill="#fbfbfb" stroke="#a2a2a2" stroke-width=".7"/><path d="M6.300 5.500A4.700 4.700 0 0 1 10.500 10.200A4.700 4.700 0 0 1 6.300 5.500Z" fill="#6e6e6e"/><circle cx="6" cy="10" r="4.700" fill="none" stroke="#a2a2a2" stroke-width=".7"/></svg>
<svg class="abs" style="left:490.5px;top:48.3px;opacity:0.88" width="16" height="16" viewBox="0 0 16 16"><ellipse cx="8" cy="13.6" rx="6" ry="1.300" fill="#9a9a9a" opacity=".75"/><path d="M6 4L11.500 12.500C11.500 14.200 1.500 14.200 1.500 12.500Z" fill="#a2a2a2" stroke="#8a8a8a" stroke-width=".5"/><circle cx="7" cy="4" r="2.800" fill="#e2e2e2" stroke="#9a9a9a" stroke-width=".7"/><path d="M9.200 6L14 9.500" stroke="#8a8a8a" stroke-width="1.100"/></svg>
<svg class="abs" style="left:512.5px;top:48.3px;opacity:0.88" width="16" height="16" viewBox="0 0 16 16"><path d="M1.500 3L4.500 1.500H14.500V11.500L11.500 14H1.500Z" fill="#a6a6a6" stroke="#8f8f8f" stroke-width=".5"/><rect x="3.500" y="5" width="6" height="6.500" fill="#8a8a8a" stroke="#c4c4c4" stroke-width=".6"/><path d="M11.500 3V14" stroke="#8f8f8f" stroke-width=".5"/><path d="M1.500 3H11.500L14.500 1.500" stroke="#c8c8c8" stroke-width=".6" fill="none"/></svg>
<svg class="abs" style="left:535.0px;top:48.3px;opacity:0.88" width="16" height="16" viewBox="0 0 16 16"><path d="M4.500 3L6.500 1.500H12V11.500L10 13.500H4.500Z" fill="#8e8e8e" stroke="#7a7a7a" stroke-width=".5"/><path d="M1 5.200L5 3.800H15L11 5.200Z" fill="#c4c4c4" stroke="#999" stroke-width=".4"/><path d="M1 8.700L5 7.300H15L11 8.700Z" fill="#c4c4c4" stroke="#999" stroke-width=".4"/><path d="M1 12.200L5 10.800H15L11 12.200Z" fill="#c4c4c4" stroke="#999" stroke-width=".4"/></svg>
<div class="abs" style="left:557.1px;top:53.8px;width:2.5px;height:1px;background:#cfcdc9;box-shadow:0 2.2px 0 #cfcdc9,0 4.4px 0 #cfcdc9;"></div>
<svg class="abs" style="left:564.5px;top:48.3px;opacity:0.88" width="16" height="16" viewBox="0 0 16 16"><g transform="rotate(0 8 8)"><path d="M2 4L4.500 2.400H13.800V10.500L11.500 13H2Z" fill="#cbcbcb" stroke="#b0b0b0" stroke-width=".5"/><path d="M3.600 5.500H10.500C10.500 10.500 5.500 11 3.600 8.500Z" fill="#5e5e5e"/><path d="M3.600 5.500H10.500L9.800 7.200H3.600Z" fill="#efefef"/></g><path d="M10.500 10.500L14.800 14" stroke="#a2a2a2" stroke-width=".9"/></svg>
<svg class="abs" style="left:586.6px;top:48.3px;opacity:0.88" width="16" height="16" viewBox="0 0 16 16"><path d="M1 2.500L15 3.500L8.500 14.500Z" fill="#a9a9a9" stroke="#7e7e7e" stroke-width="1.100" stroke-linejoin="round"/><path d="M4 4.500L12 5L8.500 11.500Z" fill="#787878"/><path d="M5 5H11L10 6.500H6Z" fill="#e8e8e8"/><path d="M10.500 10.500L14.800 13.500" stroke="#a2a2a2" stroke-width=".9"/></svg>
<div class="abs" style="left:608.1px;top:48.8px;width:1px;height:15px;background:#e3e1dd;"></div>
<svg class="abs" style="left:615.0px;top:48.3px;opacity:0.88" width="16" height="16" viewBox="0 0 16 16"><path d="M2.200 3.200L5 1.800H13.600V6L9 12.500H2.200Z" fill="#c2c2c2" stroke="#a2a2a2" stroke-width=".5"/><path d="M3.600 5H10.500C10.500 9.500 5.500 10 3.600 8Z" fill="#666"/><path d="M1.500 14.500L13.500 2.500L15 1L14 4L3.500 14.500Z" fill="#8a8a8a" stroke="#6e6e6e" stroke-width=".5"/><path d="M9 10.500L14 14.500" stroke="#a8a8a8" stroke-width=".9"/></svg>
<svg class="abs" style="left:637.5px;top:48.3px;opacity:0.88" width="16" height="16" viewBox="0 0 16 16"><g transform="rotate(0 8 8)"><path d="M2 4.200L4.400 2.600H14.400V13.400H2Z" fill="#bcbcbc" stroke="#9c9c9c" stroke-width=".5"/><path d="M2 4.200L4.400 2.600H14.400L12 4.200Z" fill="#8e8e8e"/><path d="M3.800 5.800H10.500C10.500 10.500 5.500 11 3.800 8.600Z" fill="#5a5a5a"/><path d="M3.800 5.800H10.500L9.800 7.300H3.800Z" fill="#f0f0f0"/><path d="M11.600 4.500H13.400V13H11.600Z" fill="#e0e0e0"/></g></svg>
<svg class="abs" style="left:659.5px;top:48.3px;opacity:0.88" width="16" height="16" viewBox="0 0 16 16"><g transform="rotate(35 8 8)"><path d="M2 4.200L4.400 2.600H14.400V13.400H2Z" fill="#bcbcbc" stroke="#9c9c9c" stroke-width=".5"/><path d="M2 4.200L4.400 2.600H14.400L12 4.200Z" fill="#8e8e8e"/><path d="M3.800 5.800H10.500C10.500 10.500 5.500 11 3.800 8.600Z" fill="#5a5a5a"/><path d="M3.800 5.800H10.500L9.800 7.300H3.800Z" fill="#f0f0f0"/><path d="M11.600 4.500H13.400V13H11.600Z" fill="#e0e0e0"/></g></svg>
<svg class="abs" style="left:681.6px;top:48.3px;opacity:0.88" width="16" height="16" viewBox="0 0 16 16"><g transform="rotate(0 8 8)"><path d="M2 4.200L4.400 2.600H14.400V13.400H2Z" fill="#bcbcbc" stroke="#9c9c9c" stroke-width=".5"/><path d="M2 4.200L4.400 2.600H14.400L12 4.200Z" fill="#8e8e8e"/><path d="M3.800 5.800H10.500C10.500 10.500 5.500 11 3.800 8.600Z" fill="#5a5a5a"/><path d="M3.800 5.800H10.500L9.800 7.300H3.800Z" fill="#f0f0f0"/><path d="M11.600 4.500H13.400V13H11.600Z" fill="#e0e0e0"/></g></svg><!--/TB-->
<div class="lbl" style="left:2.800px;top:70.700px;letter-spacing:-.09px">Combo View</div>
<div id="pane" class="abs"></div>
<div id="hdr" class="abs"></div>
<div id="box" class="abs"></div>

<!-- float icon -->
<svg class="abs" style="left:247px;top:72.800px" width="9" height="8" viewBox="0 0 9 8"><rect x=".3" y=".3" width="7.700" height="6.900" rx="1.600" fill="#b9b9b7" stroke="#a6a6a4" stroke-width=".5"/><path d="M2.400 1.600L3.400 2.600M3.200 3.200V4.800M4.600 3.200L5.800 2.200M5 5.600L6 4.800" stroke="#f4f4f3" stroke-width="1" stroke-linecap="round"/></svg>
<!-- tabs -->
<div class="abs" style="left:2px;top:86.500px;width:35.500px;height:16px;border:1px solid #e4e2df;border-bottom:none;border-radius:3px 3px 0 0;background:linear-gradient(#f1f0ee,#e1dfdc);box-sizing:border-box;"></div>
<div class="abs" style="left:37.700px;top:83.800px;width:30.800px;height:19.200px;border:1px solid #d9d6d2;border-bottom:none;border-radius:3px 3px 0 0;background:#fbfbfa;box-sizing:border-box;"></div>
<div class="lbl" style="left:6.5px;top:88px;letter-spacing:0.12px">Model</div>
<div class="lbl" style="left:42.500px;top:87px;letter-spacing:-0.4px">Tasks</div>
<!-- close button -->
<div class="btn" style="left:103.700px;top:114.800px;width:50.600px;height:15px;line-height:13.600px;letter-spacing:-.4px"><span style="text-decoration:underline">C</span>lose</div>
<!-- header -->
<svg class="abs" style="left:10px;top:142px" width="14" height="14" viewBox="0 0 14 14">
<rect x="1" y="7.5" width="5.5" height="5.5" rx="1.2" fill="#f2c21b" stroke="#7a5c00" stroke-width=".6"/>
<rect x="8.2" y="7" width="3.6" height="3.6" fill="#f6e9c6" stroke="#333" stroke-width=".7"/>
<path d="M3.5 4L9.5 1.5M9.5 1.5h3.5M11.2 1.5v5" stroke="#222" stroke-width=".8" fill="none"/>
<circle cx="3.3" cy="4.2" r="1.3" fill="#e11"/><circle cx="9.4" cy="1.7" r="1.3" fill="#e11"/><circle cx="11.3" cy="12" r="1.2" fill="#e11"/>
</svg>
<div class="lbl" style="left:27px;top:143px;color:#fff;font-weight:bold;letter-spacing:-0.17px">Create shape</div>
<svg class="abs" style="left:237.5px;top:144.5px" width="9" height="9" viewBox="0 0 9 9"><circle cx="4.5" cy="4.5" r="4.3" fill="#fff"/><path d="M2.6 4.3L4.5 2.5L6.4 4.3M2.6 6.6L4.5 4.8L6.4 6.6" fill="none" stroke="#ee7440" stroke-width="1"/></svg>
<!-- content -->
<div class="lbl" style="left:16px;top:165px;font-weight:bold;letter-spacing:-0.17px">Create shape</div>
<div class="radio" style="left:27.900px;top:182.0px;"></div><div class="lbl" style="left:42.500px;top:180.5px;letter-spacing:-0.02px">Edge from vertices</div>
<div class="radio" style="left:27.900px;top:199.0px;"></div><div class="lbl" style="left:42.500px;top:197.5px;letter-spacing:-0.1px">Face from vertices</div>
<div class="radio" style="left:27.900px;top:216.0px;border-color:#df6c3e;background:radial-gradient(circle,#86401f 0,#86401f 1.300px,#f28858 2.300px,#f28858 3.300px,#e26a3a 4.200px);"></div><div class="lbl" style="left:42.500px;top:214.5px;letter-spacing:-0.17px">Face from edges</div>
<div class="radio" style="left:27.900px;top:233.0px;"></div><div class="lbl" style="left:42.500px;top:231.5px;letter-spacing:-0.06px">Shell from faces</div>
<div class="radio" style="left:27.900px;top:250.0px;"></div><div class="lbl" style="left:42.500px;top:248.5px;letter-spacing:0.01px">Solid from shell</div>
<div class="abs" style="left:26.300px;top:265px;width:209.700px;height:1px;background:#dedcd9;"></div>
<div class="chk" style="left:28.100px;top:273.800px;"></div><div class="lbl" style="left:41.5px;top:272px;letter-spacing:-0.15px">Planar</div>
<div class="chk" style="left:134.600px;top:273.800px;border-color:#c9c6c1;background:#e6e4e1;"></div><div class="lbl" style="left:148px;top:272px;color:#aeaba6;letter-spacing:-0.12px">All faces</div>
<div class="btn" style="left:184.200px;top:289.200px;width:51.500px;height:15px;line-height:13.600px;letter-spacing:-.1px">Create</div>
<div class="lbl" style="left:16px;top:392.5px;letter-spacing:-0.09px">Select a closed set of edges</div>
<!-- doc tab -->
<div class="abs" style="left:260.200px;top:420px;width:119px;height:20.700px;box-shadow:0 .6px 1px rgba(0,0,0,.12);border:1px solid #d2cfca;border-top:none;border-radius:0 0 3px 3px;background:#fafaf9;box-sizing:border-box;"></div>
<svg class="abs" style="left:264px;top:425px" width="11" height="10" viewBox="0 0 11 10"><path d="M.7 .85H5.250V2.900H2.800V8.600H.7Z" fill="#ee2a0a"/><circle cx="6.300" cy="5.800" r="2.750" fill="none" stroke="#0c2c90" stroke-width="1.300" stroke-dasharray="1.250 .91"/><circle cx="6.300" cy="5.800" r="2.300" fill="#0c2c90"/><circle cx="6.300" cy="5.800" r=".85" fill="#7a96e0"/></svg>
<div class="lbl" style="left:279px;top:423.900px;letter-spacing:-0.04px">T08-ejemplo-ini : 1*</div>
<svg class="abs" style="left:364px;top:426px" width="9" height="9" viewBox="0 0 9 9"><path d="M1.5 1.5L7.5 7.5M7.5 1.5L1.5 7.5" stroke="#55544f" stroke-width="1.900"/></svg>
<div class="abs" style="left:0;top:440px;width:800px;height:1px;background:#e6e4e1;"></div>
<div id="view" class="abs"></div>
<svg class="abs" style="left:260px;top:69px" width="540" height="351" viewBox="260 69 540 351">
<g stroke="#191923" stroke-width="1.3" stroke-linejoin="round" stroke-linecap="round">
<polygon points="334.5,165 418.5,114.2 545.5,149.2 461.5,199.8" fill="#0d0b72"/>
<polygon points="461.5,199.8 545.5,149.2 545.2,288.3 461.4,338.7" fill="#0d0b8b"/>
<polygon points="334.5,165 461.5,199.8 461.4,338.7 334.4,304.2" fill="#0b0bcf"/>
<polygon points="461.5,199.8 545.5,149.2 649.4,265 618,283.8" fill="#8b8b8b"/>
<line x1="545.2" y1="288.3" x2="618" y2="307.8"/>
<line x1="461.4" y1="338.7" x2="618" y2="335.9"/>
<polygon points="618,283.8 649.4,265 696.9,277.9 665.7,296.5" fill="#0d0b72"/>
<polygon points="665.7,296.5 696.9,277.9 696.9,330 665.7,348.7" fill="#0d0b8b"/>
<polygon points="618,283.8 665.7,296.5 665.7,348.7 618,336" fill="#0b0bcf"/>
</g>
</svg>
<svg class="abs" style="left:770px;top:382px" width="29" height="30" viewBox="770 382 29 30">
<path d="M781.400 402.600L792.300 405.400" stroke="#b01c24" stroke-width="1.100"/><path d="M789.800 403.700L793.200 405.600L789.400 406.200Z" fill="#b01c24"/>
<path d="M781.400 402.600L786.200 400.200" stroke="#22a838" stroke-width="1.100"/><path d="M784.800 399.800L787.300 399.700L785.700 401.600Z" fill="#22a838"/>
<path d="M781.400 402.600V392" stroke="#1c1ca4" stroke-width="1.100"/><path d="M780.200 393.400L781.400 390.200L782.600 393.400Z" fill="#1c1ca4"/>
<g font-family="Liberation Sans,sans-serif" font-size="5.800" fill="#2e2e36"><text x="783.300" y="391">Z</text><text x="787.800" y="399.800">Y</text><text x="794" y="406.400">X</text></g>
</svg>
<div class="lbl" style="left:708.300px;top:444.500px;letter-spacing:-.23px">141.67 x 92.35 mm</div>
</body></html>
